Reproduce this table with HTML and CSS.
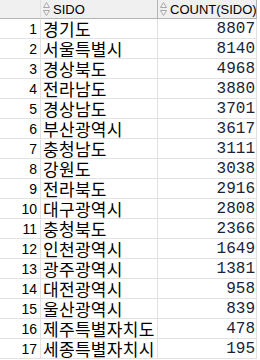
FILE: index.html
```html
<!DOCTYPE html>
<html lang="ko">
<head>
<meta charset="utf-8">
<link rel="stylesheet" href="styles.css">
</head>
<body>
<div class="grid">
  <div class="hc corner"></div>
  <div class="hc"><svg class="sort" width="7" height="14" viewBox="0 0 7 14"><path d="M3.5 0.5 L6.5 5.5 L0.5 5.5 Z M0.5 8.5 L6.5 8.5 L3.5 13.5 Z" fill="#f4f4f4" stroke="#a8a8a8" stroke-width="1" stroke-linejoin="round"/></svg><span>SIDO</span></div>
  <div class="hc last"><svg class="sort" width="7" height="14" viewBox="0 0 7 14"><path d="M3.5 0.5 L6.5 5.5 L0.5 5.5 Z M0.5 8.5 L6.5 8.5 L3.5 13.5 Z" fill="#f4f4f4" stroke="#a8a8a8" stroke-width="1" stroke-linejoin="round"/></svg><span>COUNT(SIDO)</span></div>

  <div class="num">1</div><div class="name">경기도</div><div class="cnt">8807</div>
  <div class="num">2</div><div class="name">서울특별시</div><div class="cnt">8140</div>
  <div class="num">3</div><div class="name">경상북도</div><div class="cnt">4968</div>
  <div class="num">4</div><div class="name">전라남도</div><div class="cnt">3880</div>
  <div class="num">5</div><div class="name">경상남도</div><div class="cnt">3701</div>
  <div class="num">6</div><div class="name">부산광역시</div><div class="cnt">3617</div>
  <div class="num">7</div><div class="name">충청남도</div><div class="cnt">3111</div>
  <div class="num">8</div><div class="name">강원도</div><div class="cnt">3038</div>
  <div class="num">9</div><div class="name">전라북도</div><div class="cnt">2916</div>
  <div class="num">10</div><div class="name">대구광역시</div><div class="cnt">2808</div>
  <div class="num">11</div><div class="name">충청북도</div><div class="cnt">2366</div>
  <div class="num">12</div><div class="name">인천광역시</div><div class="cnt">1649</div>
  <div class="num">13</div><div class="name">광주광역시</div><div class="cnt">1381</div>
  <div class="num">14</div><div class="name">대전광역시</div><div class="cnt">958</div>
  <div class="num">15</div><div class="name">울산광역시</div><div class="cnt">839</div>
  <div class="num">16</div><div class="name">제주특별자치도</div><div class="cnt">478</div>
  <div class="num">17</div><div class="name">세종특별자치시</div><div class="cnt">195</div>
</div>
</body>
</html>
```
FILE: styles.css
```css
html, body {
  margin: 0;
  padding: 0;
  background: #ffffff;
}
.grid {
  display: grid;
  grid-template-columns: 41px 117px 99px;
  grid-auto-rows: 20px;
  grid-template-rows: 19px;
  width: 257px;
}
.grid > div {
  box-sizing: border-box;
  border-right: 1px solid #e2e2e2;
  border-bottom: 1px solid #e2e2e2;
  white-space: nowrap;
}
.grid > .hc {
  background: #f0f0f0;
  border-right: 1px solid #b4b4b4;
  border-bottom: 1px solid #b4b4b4;
  display: flex;
  align-items: center;
  padding-left: 2px;
  gap: 3px;
  font-family: "Liberation Sans", Arial, sans-serif;
  font-size: 13px;
  color: #000;
  overflow: hidden;
}
.grid > .corner {
  border-right: 1px solid #e0e0e0;
}
.sort {
  display: block;
  flex: none;
}
.num {
  font-family: "Liberation Sans Narrow", "Liberation Sans", Arial, sans-serif;
  font-size: 14px;
  text-align: right;
  padding-right: 3px;
  line-height: 21px;
  color: #000;
}
.name {
  font-family: "Noto Sans CJK KR", "Noto Sans", sans-serif;
  font-size: 17px;
  line-height: 19px;
  padding-left: 2px;
  color: #000;
  letter-spacing: 0.3px;
}
.cnt {
  font-family: "Liberation Mono", "Courier New", monospace;
  font-size: 16px;
  line-height: 21px;
  text-align: right;
  padding-right: 1px;
  color: #1a1f3a;
}
```
